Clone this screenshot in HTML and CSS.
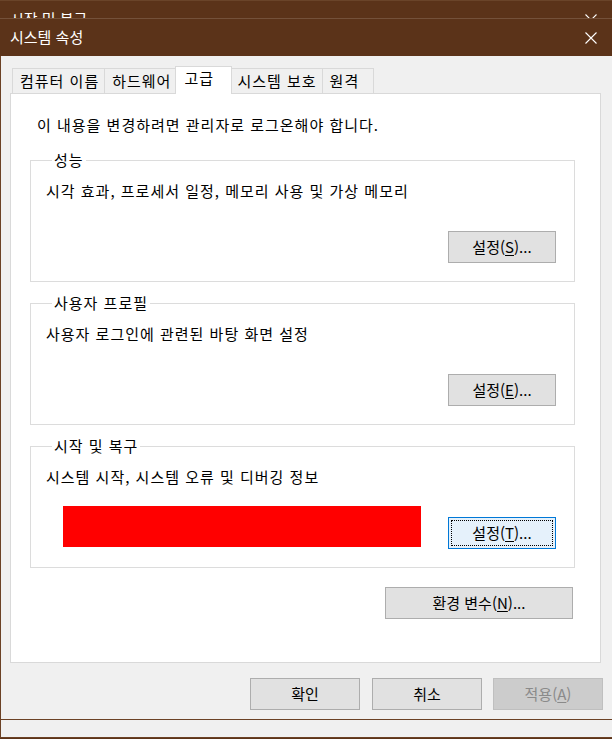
FILE: index.html
```html
<!DOCTYPE html>
<html lang="ko">
<head>
  <meta charset="UTF-8" />
  <meta name="viewport" content="width=device-width, initial-scale=1.0"/>
  <title>시스템 속성</title>
  <link rel="stylesheet" href="styles.css">
</head>
<body>

  <div class="back-window">
    <div class="titlebar">
      <span>시작 및 복구</span>
      <svg class="close" width="12" height="12" viewBox="0 0 12 12"><path d="M0.5 0.5 L11.5 11.5 M11.5 0.5 L0.5 11.5"/></svg>
    </div>
  </div>

  <div class="window">
    <div class="titlebar">
      <span>시스템 속성</span>
      <svg class="close" width="12" height="12" viewBox="0 0 12 12"><path d="M0.5 0.5 L11.5 11.5 M11.5 0.5 L0.5 11.5"/></svg>
    </div>

    <div class="client">
      <div class="tabs">
        <div class="tab">컴퓨터 이름</div>
        <div class="tab">하드웨어</div>
        <div class="tab active">고급</div>
        <div class="tab">시스템 보호</div>
        <div class="tab">원격</div>
      </div>

      <div class="panel">
        <p class="notice">이 내용을 변경하려면 관리자로 로그온해야 합니다.</p>

        <fieldset class="group">
          <legend>성능</legend>
          <p>시각 효과, 프로세서 일정, 메모리 사용 및 가상 메모리</p>
          <div class="group-actions">
            <button class="btn">설정(<u>S</u>)...</button>
          </div>
        </fieldset>

        <fieldset class="group">
          <legend>사용자 프로필</legend>
          <p>사용자 로그인에 관련된 바탕 화면 설정</p>
          <div class="group-actions">
            <button class="btn">설정(<u>E</u>)...</button>
          </div>
        </fieldset>

        <fieldset class="group">
          <legend>시작 및 복구</legend>
          <p>시스템 시작, 시스템 오류 및 디버깅 정보</p>
          <div class="group-actions with-mark">
            <div class="redacted"></div>
            <button class="btn focused">설정(<u>T</u>)...</button>
          </div>
        </fieldset>

        <div class="env-row">
          <button class="btn btn-wide">환경 변수(<u>N</u>)...</button>
        </div>
      </div>

      <div class="dialog-buttons">
        <button class="btn btn-dialog">확인</button>
        <button class="btn btn-dialog">취소</button>
        <button class="btn btn-dialog" disabled>적용(<u>A</u>)</button>
      </div>
    </div>
  </div>

  <div class="back-bottom"></div>

</body>
</html>
```

FILE: styles.css
```css
body {
  font-family: "Noto Sans CJK KR", "Liberation Sans", sans-serif;
  font-size: 15px;
  line-height: 20px;
  margin: 0;
  padding: 0;
  width: 612px;
  height: 739px;
  overflow: hidden;
  background: #5b3319;
  color: #000;
}
p {
  margin: 0;
}
.titlebar {
  display: flex;
  justify-content: space-between;
  align-items: center;
  height: 37px;
  padding: 0 15px 0 10px;
  background: #5b3319;
  color: #fff;
}
.titlebar span {
  margin-top: -1px;
}
.close path {
  stroke: #fff;
  stroke-width: 1.1;
  fill: none;
}
.back-window {
  height: 17px;
  overflow: hidden;
  border-top: 1px solid #6a4429;
}
.window {
  border-top: 1px solid #74513a;
}
.client {
  box-sizing: border-box;
  height: 663px;
  background: #f0f0f0;
  border-left: 1px solid #6b4125;
  padding: 10px 11px 0 9px;
}
.tabs {
  display: flex;
  align-items: flex-end;
  height: 27px;
  padding-left: 2px;
}
.tab {
  box-sizing: border-box;
  height: 25px;
  min-width: 52px;
  line-height: 23px;
  letter-spacing: 1px;
  padding: 0 5px 0 7px;
  background: #f0f0f0;
  border: 1px solid #d9d9d9;
  border-bottom: none;
  margin-left: -1px;
}
.tab:first-child {
  margin-left: 0;
}
.tab.active {
  position: relative;
  z-index: 1;
  height: 28px;
  min-width: 57px;
  line-height: 21px;
  margin: 0 -2px -1px -2px;
  padding: 0 5px 0 8px;
  background: #fff;
}
.panel {
  box-sizing: border-box;
  height: 570px;
  background: #fff;
  border: 1px solid #d9d9d9;
  padding: 21px 0 0 0;
}
.panel p,
.panel legend {
  letter-spacing: 1px;
}
.notice {
  padding-left: 26px;
}
.group {
  margin: 15px 25px 0 19px;
  padding: 11px 18px 18px 15px;
  border: 1px solid #dcdcdc;
  min-inline-size: 0;
}
.group + .group {
  margin-top: 11px;
}
.group legend {
  padding: 0 2px;
  margin-left: 6px;
}
.group-actions {
  display: flex;
  justify-content: flex-end;
  margin-top: 30px;
}
.group-actions.with-mark {
  justify-content: space-between;
  align-items: flex-end;
  margin-top: 19px;
}
.redacted {
  width: 358px;
  height: 41px;
  margin: 0 0 2px 17px;
  background: #ff0000;
}
.btn {
  box-sizing: border-box;
  width: 108px;
  height: 32px;
  padding: 0;
  font-family: inherit;
  font-size: 15px;
  line-height: 20px;
  color: #000;
  background: #e1e1e1;
  border: 1px solid #adadad;
  border-radius: 0;
}
.btn u {
  text-underline-offset: 2px;
}
.btn.focused {
  background: #e5f1fb;
  border-color: #0078d7;
  outline: 1px dotted #000;
  outline-offset: -4px;
}
.btn:disabled {
  background: #cccccc;
  border-color: #bfbfbf;
  color: #8a8a8a;
}
.env-row {
  display: flex;
  justify-content: flex-end;
  margin-top: 19px;
  padding-right: 27px;
}
.btn-wide {
  width: 188px;
}
.dialog-buttons {
  display: flex;
  justify-content: flex-end;
  gap: 12px;
  margin: 15px -2px 0 0;
}
.btn-dialog {
  width: 110px;
}
.dialog-buttons .btn-dialog:last-child {
  margin-left: -1px;
}
.back-bottom {
  box-sizing: border-box;
  height: 19px;
  background: #f0f0f0;
  border-top: 1px solid #6b4125;
  border-left: 1px solid #6b4125;
  border-bottom: 1px solid #6b4125;
}
```
